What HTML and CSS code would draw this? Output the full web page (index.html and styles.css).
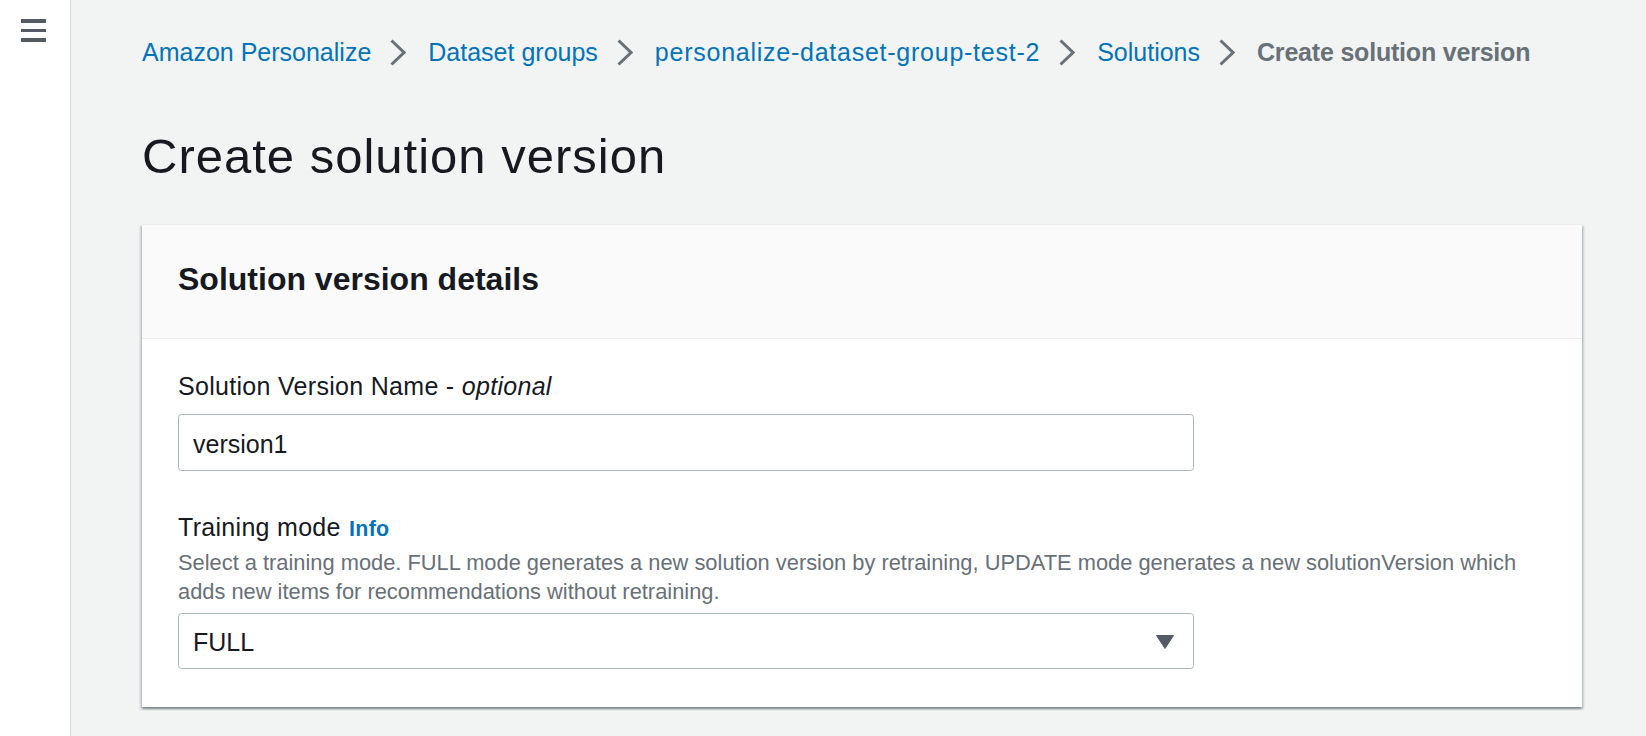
FILE: index.html
```html
<!DOCTYPE html>
<html lang="en">
<head>
<meta charset="utf-8">
<title>Create solution version</title>
<link rel="stylesheet" href="styles.css">
</head>
<body>
<div class="app">
  <aside class="sidebar">
    <button class="menu-btn" aria-label="Open navigation">
      <span class="bar"></span><span class="bar"></span><span class="bar"></span>
    </button>
  </aside>
  <main class="main">
    <nav class="breadcrumbs">
      <a class="crumb-link" href="#">Amazon Personalize</a>
      <svg class="chev" viewBox="0 0 16 27" width="16" height="27"><path d="M1.5 1.5 L14 13.5 L1.5 25.5" fill="none" stroke="#687078" stroke-width="3"/></svg>
      <a class="crumb-link" href="#">Dataset groups</a>
      <svg class="chev" viewBox="0 0 16 27" width="16" height="27"><path d="M1.5 1.5 L14 13.5 L1.5 25.5" fill="none" stroke="#687078" stroke-width="3"/></svg>
      <a class="crumb-link crumb-long" href="#">personalize-dataset-group-test-2</a>
      <svg class="chev" viewBox="0 0 16 27" width="16" height="27"><path d="M1.5 1.5 L14 13.5 L1.5 25.5" fill="none" stroke="#687078" stroke-width="3"/></svg>
      <a class="crumb-link" href="#">Solutions</a>
      <svg class="chev" viewBox="0 0 16 27" width="16" height="27"><path d="M1.5 1.5 L14 13.5 L1.5 25.5" fill="none" stroke="#687078" stroke-width="3"/></svg>
      <span class="crumb-current">Create solution version</span>
    </nav>
    <h1 class="page-title">Create solution version</h1>
    <section class="card">
      <header class="card-header">
        <h2 class="card-title">Solution version details</h2>
      </header>
      <div class="card-body">
        <div class="field">
          <label class="field-label" for="svname">Solution Version Name - <i>optional</i></label>
          <input class="text-input" id="svname" type="text" value="version1">
        </div>
        <div class="field field-second">
          <div class="field-label">Training mode <a class="info-link" href="#">Info</a></div>
          <div class="field-desc">Select a training mode. FULL mode generates a new solution version by retraining, UPDATE mode generates a new solutionVersion which adds new items for recommendations without retraining.</div>
          <div class="select-box">
            <span class="select-value">FULL</span>
            <svg class="caret" viewBox="0 0 18 14" width="18" height="14"><path d="M0.5 0.5 L17.5 0.5 L9 13.5 Z" fill="#545b64" stroke="#545b64" stroke-width="1" stroke-linejoin="round"/></svg>
          </div>
        </div>
      </div>
    </section>
  </main>
</div>
</body>
</html>
```

FILE: styles.css
```css
* { box-sizing: border-box; }
html, body { margin: 0; padding: 0; }
body {
  font-family: "Liberation Sans", Arial, sans-serif;
  color: #16191f;
  background: #f2f3f3;
}
.app {
  display: flex;
  min-height: 736px;
}
.sidebar {
  width: 71px;
  flex: 0 0 71px;
  background: #ffffff;
  border-right: 1px solid #d5dbdb;
}
.menu-btn {
  display: flex;
  flex-direction: column;
  gap: 6px;
  margin: 19px 0 0 21px;
  padding: 0;
  border: 0;
  background: transparent;
  width: 25px;
}
.bar {
  display: block;
  width: 25px;
  height: 3.5px;
  background: #545b64;
}
.main {
  flex: 1;
  padding: 33px 64px 0 71px;
}
.breadcrumbs {
  display: flex;
  align-items: center;
  height: 39px;
  font-size: 25px;
  line-height: 39px;
  white-space: nowrap;
}
.crumb-link {
  color: #0073bb;
  text-decoration: none;
}
.crumb-long {
  letter-spacing: 0.75px;
}
.chev {
  display: block;
  margin: 0 22px 0 19px;
}
.crumb-current {
  color: #687078;
  font-weight: bold;
  letter-spacing: -0.2px;
}
.page-title {
  margin: 52px 0 0 0;
  font-size: 49px;
  line-height: 64px;
  font-weight: normal;
  letter-spacing: 1px;
  color: #16191f;
}
.card {
  margin-top: 36px;
  background: #ffffff;
  border-top: 1px solid #eaeded;
  box-shadow: 0 2px 2px 0 rgba(0, 28, 36, 0.3), 2px 2px 2px 0 rgba(0, 28, 36, 0.15), -2px 2px 2px 0 rgba(0, 28, 36, 0.15);
}
.card-header {
  background: #fafafa;
  border-bottom: 1px solid #eaeded;
  padding: 35px 36px 39px 36px;
}
.card-title {
  margin: 0;
  font-size: 32px;
  line-height: 39px;
  font-weight: bold;
  color: #16191f;
}
.card-body {
  padding: 28px 36px 38px 36px;
}
.field-second {
  margin-top: 37px;
}
.field-label {
  display: block;
  font-size: 25px;
  line-height: 39px;
  letter-spacing: 0.3px;
  color: #16191f;
}
.info-link {
  color: #0073bb;
  font-weight: bold;
  font-size: 21.4px;
  text-decoration: none;
  margin-left: 1px;
}
.field-desc {
  font-size: 21.85px;
  line-height: 28.5px;
  color: #687078;
}
.text-input {
  display: block;
  margin-top: 8px;
  width: 1016px;
  height: 57px;
  padding: 3px 14px 0 14px;
  border: 1px solid #aab7b8;
  border-radius: 3.5px;
  background: #ffffff;
  font-family: "Liberation Sans", Arial, sans-serif;
  font-size: 25px;
  color: #16191f;
  outline: none;
}
.select-box {
  display: flex;
  align-items: center;
  justify-content: space-between;
  margin-top: 7px;
  width: 1016px;
  height: 56px;
  padding: 2px 19px 0 14px;
  border: 1px solid #aab7b8;
  border-radius: 3.5px;
  background: #ffffff;
}
.select-value {
  font-size: 25px;
  line-height: 39px;
  color: #16191f;
}
.caret {
  display: block;
}
```
